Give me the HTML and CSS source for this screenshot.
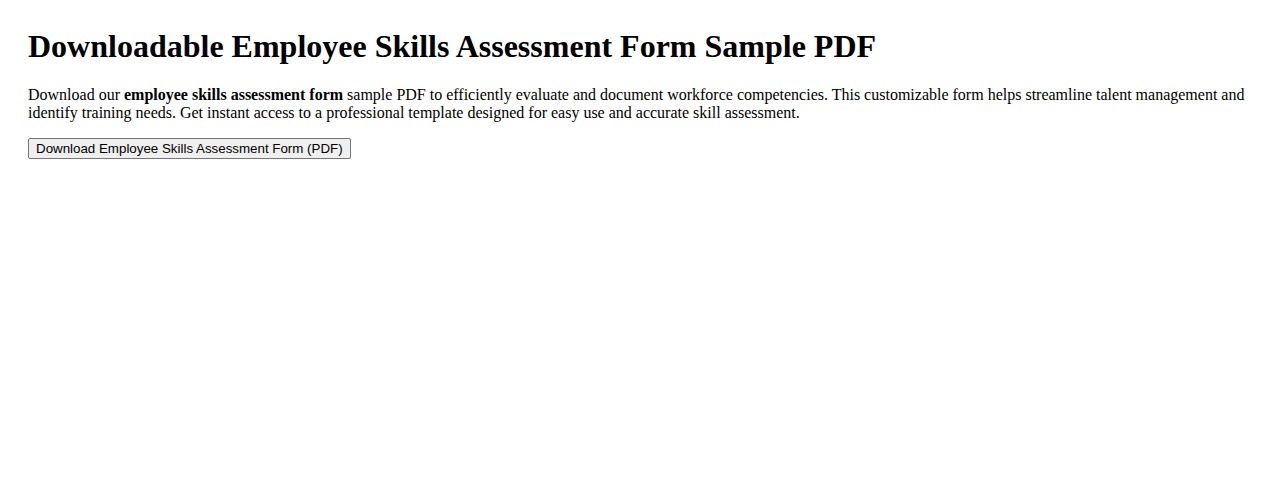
FILE: index.html
```html
<!DOCTYPE html>
<html lang="en">
<head>
    <meta charset="UTF-8">
    <meta name="viewport" content="width=device-width, initial-scale=1.0">
    <title>Employee Skills Assessment Form Sample PDF</title>
    <link rel="stylesheet" href="styles.css">
</head>
<body>

    <h1 class="title">Downloadable Employee Skills Assessment Form Sample PDF</h1>

    <p class="intro">Download our <strong>employee skills assessment form</strong> sample PDF to efficiently evaluate and document workforce competencies. This customizable form helps streamline talent management and identify training needs. Get instant access to a professional template designed for easy use and accurate skill assessment.</p>

    <button class="download-btn" type="button">Download Employee Skills Assessment Form (PDF)</button>

</body>
</html>
```

FILE: styles.css
```css
body {
    margin: 28px;
    font-family: "Liberation Serif", "Times New Roman", serif;
    font-size: 16px;
    color: #000;
    background: #fff;
}

.title {
    font-size: 32px;
    font-weight: bold;
    margin: 0 0 21px;
}

.intro {
    margin: 16px 0;
}

/* 기본 버튼 모양 */
.download-btn {
    font-family: "Liberation Sans", Arial, sans-serif;
    font-size: 13.33px;
    color: #000;
    background: #efefef;
    border: 1px solid #767676;
    border-radius: 2px;
    padding: 1px 7px;
    height: 21px;
}
```
